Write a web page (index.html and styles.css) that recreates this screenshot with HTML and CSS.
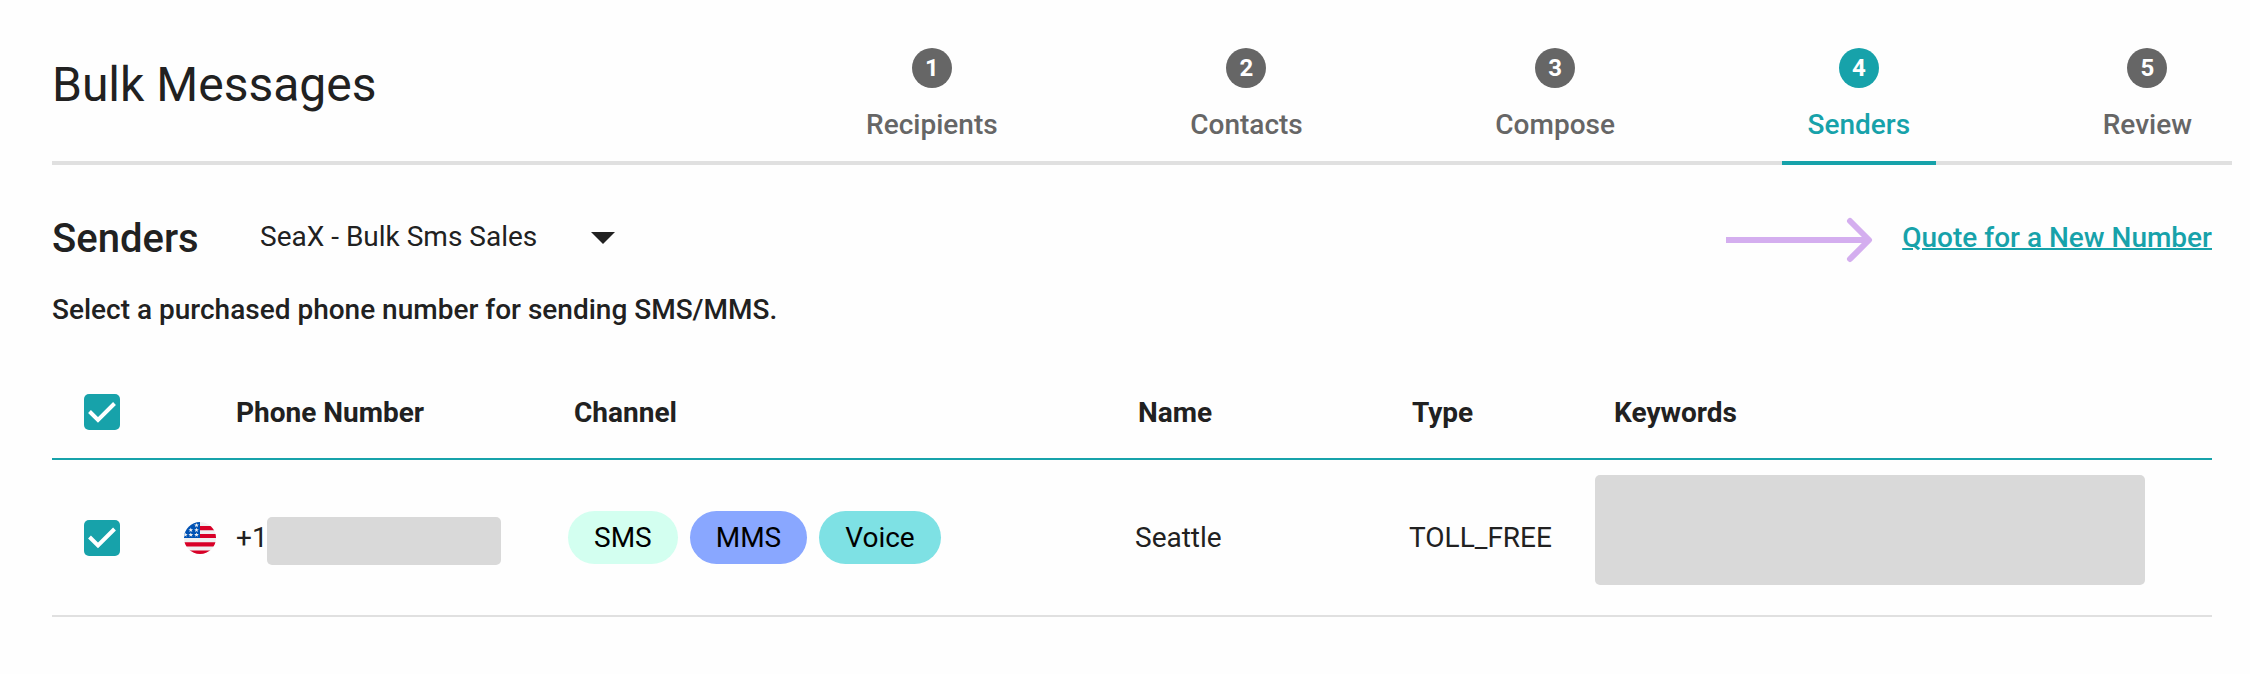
FILE: index.html
```html
<!DOCTYPE html>
<html lang="en">
<head>
<meta charset="utf-8">
<title>Bulk Messages</title>
<link rel="stylesheet" href="styles.css">
</head>
<body>
<header class="header">
  <h1 class="title">Bulk Messages</h1>
  <nav class="steps">
    <div class="step"><span class="step-num">1</span><span class="step-label">Recipients</span></div>
    <div class="step"><span class="step-num">2</span><span class="step-label">Contacts</span></div>
    <div class="step"><span class="step-num">3</span><span class="step-label">Compose</span></div>
    <div class="step active"><span class="step-num">4</span><span class="step-label">Senders</span></div>
    <div class="step"><span class="step-num">5</span><span class="step-label">Review</span></div>
  </nav>
</header>
<main class="main">
  <div class="toolbar">
    <h2 class="heading">Senders</h2>
    <div class="select"><span class="select-value">SeaX - Bulk Sms Sales</span>
      <svg class="caret" width="24" height="12" viewBox="0 0 24 12"><path d="M0 0h24L12 12z" fill="#212121"/></svg>
    </div>
    <svg class="pointer" width="150" height="46" viewBox="0 0 150 46" fill="none" stroke="#d4aeef" stroke-width="6" stroke-linejoin="round"><path d="M0 23h142"/><path d="M124 4l19 19-19 19" stroke-linecap="round"/></svg>
    <a class="quote" href="#">Quote for a New Number</a>
  </div>
  <p class="hint">Select a purchased phone number for sending SMS/MMS.</p>
  <section class="table">
    <div class="row head">
      <div class="check"><svg class="tick" width="36" height="36" viewBox="0 0 36 36" fill="none" stroke="#fff" stroke-width="4"><path d="M5.500 17.500l8.500 8.500L30.500 9.500"/></svg></div>
      <div></div>
      <div class="phone-title">Phone Number</div>
      <div class="channel-title">Channel</div>
      <div class="name-title">Name</div>
      <div class="type-title">Type</div>
      <div class="keywords-title">Keywords</div>
    </div>
    <div class="row body">
      <div class="check"><svg class="tick" width="36" height="36" viewBox="0 0 36 36" fill="none" stroke="#fff" stroke-width="4"><path d="M5.500 17l8.500 8.500L30.500 9"/></svg></div>
      <div class="flag">
        <svg width="32" height="32" viewBox="0 0 32 32">
          <defs><clipPath id="disc"><circle cx="16" cy="16" r="16"/></clipPath></defs>
          <g clip-path="url(#disc)">
            <path fill="#f0f0f0" d="M0 0h32v32H0z"/>
            <path fill="#d80027" d="M15 4h17v4.200H15zM15 12h17v4H15zM0 20.200h32v4.200H0zM0 28.400h32V32H0z"/>
            <path fill="#0052b4" d="M0 0h16v16H0z"/>
            <path id="star" fill="#f0f0f0" d="M12.500 .9l.6 1.700h1.800l-1.450 1.050.55 1.700-1.500-1.050-1.500 1.050.55-1.700L10.100 2.600h1.800z"/>
            <use href="#star" x="0" y="4.700"/><use href="#star" x="-5.700" y="4.700"/>
            <use href="#star" x="0" y="9.500"/><use href="#star" x="-5.700" y="9.500"/><use href="#star" x="-11.200" y="9.500"/>
          </g>
        </svg>
      </div>
      <div class="phone"><span class="prefix">+1</span><span class="mask"></span></div>
      <div class="chips"><span class="chip sms">SMS</span><span class="chip mms">MMS</span><span class="chip voice">Voice</span></div>
      <div>Seattle</div>
      <div>TOLL_FREE</div>
      <div class="mask keywords"></div>
    </div>
  </section>
</main>
</body>
</html>
```
FILE: styles.css
```css
* { box-sizing: border-box; }
body {
  margin: 0;
  height: 674px;
  overflow: hidden;
  background: #fefefe;
  color: #212121;
  font: 400 28px/32px Roboto, sans-serif;
}
h1, h2, p { margin: 0; }
svg { display: block; }
.header {
  display: flex;
  justify-content: space-between;
  height: 165px;
  margin: 0 18px 0 52px;
  border-bottom: 4px solid #e0e0e0;
}
.title {
  padding-top: 57px;
  font-size: 48px;
  font-weight: 400;
  line-height: 56px;
}
.steps {
  display: flex;
  gap: 140.600px;
  height: 165px;
  margin-right: 14px;
}
.step {
  display: flex;
  flex-direction: column;
  align-items: center;
  gap: 21px;
  padding: 48px 26px 0;
  border-bottom: 4px solid transparent;
  color: #666;
  font-weight: 500;
}
.step-num {
  width: 40px;
  height: 40px;
  border-radius: 50%;
  background: #666;
  color: #fff;
  font-size: 24px;
  font-weight: 700;
  line-height: 40px;
  text-align: center;
}
.active { color: #17a2aa; border-bottom-color: #17a2aa; }
.active .step-num { background: #17a2aa; }
.main { padding: 0 38px 0 52px; }
.toolbar {
  display: flex;
  align-items: center;
  height: 75px;
  margin-top: 36px;
}
.heading {
  width: 208px;
  font-size: 40px;
  font-weight: 500;
  line-height: 48px;
}
.select { display: flex; align-items: center; }
.select-value { width: 331px; padding-bottom: 3px; }
.caret { margin-bottom: 2px; }
.pointer { margin: 3px 26px 0 auto; }
.quote {
  padding-bottom: 2px;
  color: #17a2aa;
  font-weight: 500;
  text-decoration: underline 2px;
}
.hint { margin-top: 18px; font-weight: 500; }
.table { margin-top: 40px; }
.row {
  display: grid;
  grid-template-columns: 132px 52px 332px 567px 274px 185px 1fr;
  align-items: center;
}
.head {
  height: 94px;
  border-bottom: 2px solid #17a2aa;
  font-weight: 700;
}
.body { height: 157px; border-bottom: 2px solid #e0e0e0; }
.check { padding-left: 32px; }
.tick { border-radius: 5px; background: #17a2aa; }
.phone-title, .channel-title, .name-title, .type-title, .keywords-title { padding-top: 1px; }
.channel-title { padding-left: 6px; }
.name-title, .type-title { padding-left: 3px; }
.keywords-title { padding-left: 20px; }
.phone { display: flex; align-items: center; }
.prefix { width: 31px; }
.mask { border-radius: 5px; background: #d9d9d9; }
.phone .mask { width: 234px; height: 48px; margin-top: 6px; }
.keywords { width: 550px; height: 110px; margin: 0 0 15px 1px; }
.chips { display: flex; gap: 12px; color: #000; }
.chip { padding: 0 26px; border-radius: 27px; line-height: 53px; }
.sms { background: #d3fff0; }
.mms { background: #89a7ff; }
.voice { background: #7ee1e4; }
```
